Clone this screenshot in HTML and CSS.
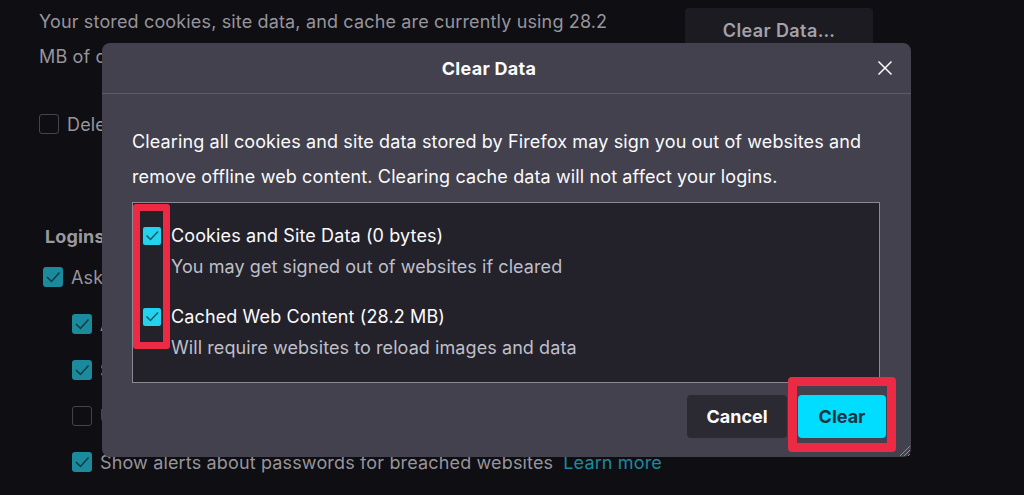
FILE: index.html
```html
<!DOCTYPE html>
<html lang="en">
<head>
<meta charset="utf-8">
<title>Clear Data</title>
<link rel="stylesheet" href="styles.css">
</head>
<body>
<main class="prefs">
  <section class="storage">
    <p class="storage-text">Your stored cookies, site data, and cache are currently using 28.2 MB of disk space.</p>
    <div class="storage-actions">
      <button class="bg-btn">Clear Data…</button>
    </div>
  </section>
  <div class="option option-delete"><span class="cb cb-off"></span><span>Delete cookies and site data when Firefox is closed</span></div>

  <h2 class="section-title">Logins and Passwords</h2>
  <div class="option option-ask"><span class="cb"><svg viewBox="0 0 20 20"><path d="M4 10 L8.5 14.5 L16.5 5.5" /></svg></span><span>Ask to save logins and passwords for websites</span></div>
  <div class="sub-options">
    <div class="option"><span class="cb"><svg viewBox="0 0 20 20"><path d="M4 10 L8.5 14.5 L16.5 5.5" /></svg></span><span>Autofill logins and passwords</span></div>
    <div class="option"><span class="cb"><svg viewBox="0 0 20 20"><path d="M4 10 L8.5 14.5 L16.5 5.5" /></svg></span><span>Suggest and generate strong passwords</span></div>
    <div class="option"><span class="cb cb-off"></span><span>Use a Primary Password</span></div>
    <div class="option"><span class="cb"><svg viewBox="0 0 20 20"><path d="M4 10 L8.5 14.5 L16.5 5.5" /></svg></span><span>Show alerts about passwords for breached websites</span><a class="learn">Learn more</a></div>
  </div>
</main>

<div class="dialog" role="dialog">
  <header class="dialog-header">
    <span class="dialog-title">Clear Data</span>
    <span class="close"><svg viewBox="0 0 16 16"><path d="M1.5 1.5 L14.5 14.5 M14.5 1.5 L1.5 14.5" /></svg></span>
  </header>
  <div class="dialog-body">
    <p class="intro">Clearing all cookies and site data stored by Firefox may sign you out of websites and remove offline web content. Clearing cache data will not affect your logins.</p>
    <div class="list">
      <div class="item">
        <span class="dcb"><svg viewBox="0 0 18 18"><path d="M3.5 8.5 L7.5 12.5 L15 4.5" /></svg></span>
        <span class="item-label">Cookies and Site Data (0 bytes)</span>
        <span class="item-desc">You may get signed out of websites if cleared</span>
      </div>
      <div class="item">
        <span class="dcb"><svg viewBox="0 0 18 18"><path d="M3.5 8.5 L7.5 12.5 L15 4.5" /></svg></span>
        <span class="item-label">Cached Web Content (28.2 MB)</span>
        <span class="item-desc">Will require websites to reload images and data</span>
      </div>
    </div>
    <div class="actions">
      <button class="btn btn-cancel">Cancel</button>
      <button class="btn btn-clear">Clear</button>
    </div>
  </div>
  <svg class="grip" viewBox="0 0 14 14"><path d="M13 3 L3 13 M13 7 L7 13 M13 11 L11 13" /></svg>
</div>

<div class="mark mark-checks"></div>
<div class="mark mark-clear"></div>
</body>
</html>
```

FILE: styles.css
```css
html, body {
  margin: 0;
  padding: 0;
}

body {
  width: 1024px;
  height: 495px;
  overflow: hidden;
  position: relative;
  background: #0f0e13;
  font-family: Inter, "Noto Sans", sans-serif;
  font-size: 18px;
  letter-spacing: 0.15px;
  color: #96959c;
}

.prefs {
  padding: 4px 0 0 39px;
}

.storage {
  display: flex;
  align-items: flex-start;
  gap: 56px;
}

.storage-text {
  width: 590px;
  margin: 0;
  line-height: 35px;
}

.storage-actions {
  display: flex;
  flex-direction: column;
  margin-top: 4px;
}

.bg-btn {
  width: 188px;
  height: 44px;
  border: 0;
  border-radius: 4px;
  background: #1c1b22;
  color: #a3a2a9;
  font-family: Inter, "Noto Sans", sans-serif;
  font-size: 18px;
  font-weight: 600;
  letter-spacing: 0.4px;
}

.option {
  display: flex;
  align-items: center;
  gap: 8px;
  height: 30px;
  white-space: nowrap;
}

.option-delete {
  margin-top: 35px;
}

.section-title {
  margin: 83px 0 0 6px;
  font-size: 18px;
  font-weight: 700;
  line-height: 30px;
  color: #9a999f;
}

.option-ask {
  margin-top: 10px;
  margin-left: 4px;
}

.sub-options {
  display: flex;
  flex-direction: column;
  gap: 16px;
  margin-top: 17px;
  margin-left: 33px;
}

.cb {
  width: 20px;
  height: 20px;
  border-radius: 3px;
  background: #1b8a9c;
  box-sizing: border-box;
  flex: none;
  display: flex;
}

.cb svg {
  width: 20px;
  height: 20px;
  fill: none;
  stroke: #0e3a45;
  stroke-width: 1.5;
}

.cb-off {
  background: transparent;
  border: 1.5px solid #45444c;
}

.learn {
  color: #1b8a9c;
  margin-left: 2px;
}

.dialog {
  position: absolute;
  left: 102px;
  top: 43px;
  width: 809px;
  height: 414px;
  box-sizing: border-box;
  background: #42414d;
  border-radius: 8px;
  display: flex;
  flex-direction: column;
  color: #fbfbfe;
  letter-spacing: 0;
}

.dialog-header {
  height: 50px;
  display: flex;
  align-items: center;
  border-bottom: 1px solid #5c5b66;
  padding: 0 12px 0 5px;
}

.dialog-title {
  flex: 1;
  text-align: center;
  font-weight: 700;
  font-size: 18px;
  letter-spacing: 0.3px;
}

.close {
  width: 28px;
  height: 28px;
  display: flex;
  align-items: center;
  justify-content: center;
}

.close svg {
  width: 16px;
  height: 16px;
  fill: none;
  stroke: #fbfbfe;
  stroke-width: 1.5;
}

.dialog-body {
  display: flex;
  flex-direction: column;
  padding: 29px 25px 19px 30px;
}

.intro {
  margin: 0;
  line-height: 35px;
  letter-spacing: 0.12px;
  padding-top: 1px;
}

.list {
  margin-top: 8px;
  width: 748px;
  height: 181px;
  box-sizing: border-box;
  border: 1px solid #8b8a94;
  background: #23222b;
  padding: 17px 10px;
}

.item {
  display: grid;
  grid-template-columns: 18px 1fr;
  column-gap: 10px;
}

.item + .item {
  margin-top: 19px;
}

.dcb {
  width: 18px;
  height: 18px;
  margin-top: 7px;
  border-radius: 2px;
  background: #22d3ee;
  display: flex;
}

.dcb svg {
  width: 18px;
  height: 18px;
  fill: none;
  stroke: #1a5266;
  stroke-width: 1.5;
}

.item-label {
  line-height: 31px;
  letter-spacing: 0.12px;
}

.item-desc {
  grid-column: 2;
  line-height: 31px;
  letter-spacing: 0.08px;
  color: #bfbfc9;
}

.actions {
  display: flex;
  justify-content: flex-end;
  gap: 11px;
  margin-top: 12px;
}

.btn {
  height: 43px;
  border: 0;
  border-radius: 4px;
  font-family: Inter, "Noto Sans", sans-serif;
  font-size: 18px;
  font-weight: 700;
}

.btn-cancel {
  width: 100px;
  background: #2b2a33;
  color: #fbfbfe;
}

.btn-clear {
  width: 88px;
  background: #00ddff;
  color: #163443;
}

.grip {
  position: absolute;
  right: 0;
  bottom: 0;
  width: 14px;
  height: 14px;
  fill: none;
  stroke: #8f8e97;
  stroke-width: 1;
}

.mark {
  position: absolute;
  box-sizing: border-box;
  border: 7px solid #ec2a44;
  border-radius: 3px;
}

.mark-checks {
  left: 133px;
  top: 204px;
  width: 37px;
  height: 145px;
}

.mark-clear {
  left: 788px;
  top: 377px;
  width: 108px;
  height: 75px;
  border-width: 9px;
  border-radius: 4px;
}
```
